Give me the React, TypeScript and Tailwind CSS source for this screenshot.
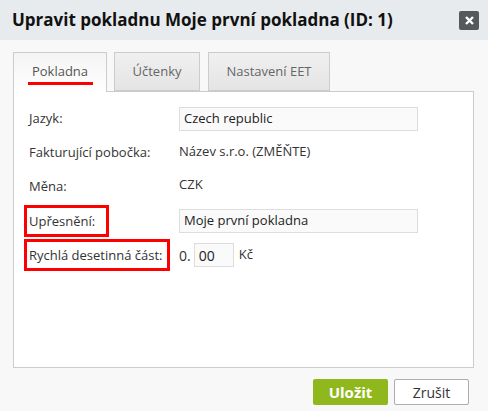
function Row({
  label,
  children,
  box,
}: {
  label: string;
  children: React.ReactNode;
  box?: string;
}) {
  return (
    <div className="flex h-[34px] items-center">
      <div className="w-[150px] shrink-0">
        {box ? (
          <span
            className={`-ml-[5px] inline-block border-[3px] border-[#ff0000] py-[4px] pl-[2px] leading-[18px] ${box}`}
          >
            {label}
          </span>
        ) : (
          <span className="leading-[18px]">{label}</span>
        )}
      </div>
      <div className="flex items-center">{children}</div>
    </div>
  );
}

export default function App() {
  return (
    <div
      className="flex h-[411px] w-[488px] flex-col bg-[#f8f8f8] text-[13px] text-[#333]"
      style={{ fontFamily: '"Open Sans", "DejaVu Sans", sans-serif' }}
    >
      <div className="flex h-[40px] shrink-0 items-center justify-between bg-[#e8ebee] pl-[12px] pr-[9px]">
        <h1 className="text-[17px] font-bold text-[#111]">
          Upravit pokladnu Moje první pokladna (ID: 1)
        </h1>
        <button className="flex h-[19px] w-[20px] items-center justify-center rounded-[2px] bg-[#55595c]">
          <svg width="9" height="9" viewBox="0 0 9 9">
            <path d="M1 1 L8 8 M8 1 L1 8" stroke="#fff" strokeWidth="2.4" />
          </svg>
        </button>
      </div>

      <div className="flex flex-1 flex-col pl-[13px] pr-[14px] pt-[12px]">
        <div className="flex h-[39px] items-end">
          <div className="relative z-10 -mb-px flex h-[40px] w-[94px] flex-col items-center border border-b-0 border-[#ccc] bg-gradient-to-b from-[#f4f4f4] to-white pt-[9px] text-[#555]">
            <span className="leading-[18px]">Pokladna</span>
            <div className="mt-[2px] h-[3px] w-[65px] bg-[#ff0000]" />
          </div>
          <div className="ml-[7px] flex h-[39px] w-[86px] items-start justify-center border border-[#ccc] bg-gradient-to-b from-[#f0f0f0] to-[#e4e4e4] pt-[9px] text-[#666]">
            Účtenky
          </div>
          <div className="ml-[8px] flex h-[39px] w-[122px] items-start justify-center border border-[#ccc] bg-gradient-to-b from-[#f0f0f0] to-[#e4e4e4] pt-[9px] text-[#666]">
            Nastavení EET
          </div>
        </div>

        <div className="h-[277px] border border-[#ccc] bg-white pl-[15px] pt-[10px]">
          <Row label="Jazyk:">
            <div className="flex h-[24px] w-[239px] items-center border border-[#ddd] bg-[#fafafa] px-[4px] text-[#222]">
              Czech republic
            </div>
          </Row>
          <Row label="Fakturující pobočka:">
            <span className="mb-[3px]">Název s.r.o. (ZMĚŇTE)</span>
          </Row>
          <Row label="Měna:">
            <span className="mb-[4px]">CZK</span>
          </Row>
          <Row label="Upřesnění:" box="pr-[11px]">
            <div className="flex h-[24px] w-[239px] items-center border border-[#ddd] bg-[#fafafa] px-[4px] text-[#222]">
              Moje první pokladna
            </div>
          </Row>
          <Row label="Rychlá desetinná část:" box="pr-[4px]">
            <span className="text-[14px]">0.</span>
            <div className="ml-[3px] flex h-[24px] w-[40px] items-center border border-[#ddd] bg-[#fafafa] px-[4px] text-[14px] text-[#222]">
              00
            </div>
            <span className="ml-[5px]">Kč</span>
          </Row>
        </div>

        <div className="mt-[11px] flex justify-end gap-[6px] pr-[5px]">
          <button className="h-[26px] w-[75px] rounded-[2px] bg-[#8fb81c] text-[15px] font-bold text-white">
            Uložit
          </button>
          <button className="h-[26px] w-[75px] rounded-[2px] border border-[#a9adb8] bg-white text-[14px] text-[#333]">
            Zrušit
          </button>
        </div>
      </div>
    </div>
  );
}
